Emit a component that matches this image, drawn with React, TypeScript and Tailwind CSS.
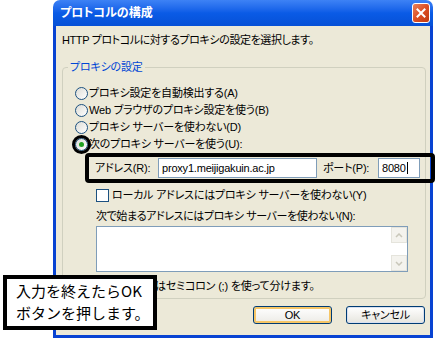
import React from "react";

function Radio({ checked }: { checked?: boolean }) {
  return (
    <span className="relative flex items-center justify-center w-[13px] h-[13px] rounded-full border border-[#1C5180] bg-gradient-to-br from-[#DCDCD6] to-white shrink-0">
      {checked && <span className="w-[5px] h-[5px] rounded-full bg-[#21A121]" />}
    </span>
  );
}

function RadioRow({ label, checked }: { label: string; checked?: boolean }) {
  return (
    <div className="relative h-[17px] flex items-center gap-[1px]">
      <Radio checked={checked} />
      <span className="leading-[13px]">{label}</span>
      {checked && (
        <span className="absolute left-[-3px] top-[-1px] w-[19px] h-[19px] rounded-full border-[3px] border-black" />
      )}
    </div>
  );
}

export default function App() {
  return (
    <div className="relative w-[436px] h-[338px] bg-white overflow-hidden font-['Liberation_Sans','Noto_Sans_CJK_JP',sans-serif] text-[11px] tracking-[-0.2px] text-black [font-feature-settings:'palt']">
      <div className="ml-[53px] w-[380px] h-[338px] flex flex-col">
        {/* title bar */}
        <div className="h-[26px] shrink-0 rounded-t-[7px] bg-gradient-to-b from-[#3D82F5] via-[#0A5BE6] to-[#0650D6] flex items-center justify-between pl-[7px] pr-[3px]">
          <span className="text-white font-bold text-[12px] leading-[14px] tracking-[0px]">プロトコルの構成</span>
          <span className="w-[18px] h-[20px] rounded-[3px] border border-white bg-gradient-to-br from-[#E8805A] via-[#DC4E22] to-[#C03A10] flex items-center justify-center">
            <svg width="10" height="10" viewBox="0 0 10 10">
              <path d="M1.5 1.5 L8.5 8.5 M8.5 1.5 L1.5 8.5" stroke="white" strokeWidth="2" strokeLinecap="square" />
            </svg>
          </span>
        </div>
        {/* body */}
        <div className="flex-1 bg-[#ECE9D8] border-x-[3px] border-b-[3px] border-[#0843D2] flex flex-col pl-[6px] pr-[4px]">
          <div className="mt-[8px] h-[13px] leading-[13px] tracking-[-0.4px]">HTTP プロトコルに対するプロキシの設定を選択します。</div>
          <fieldset className="mt-[14px] border border-[#D0D0BF] rounded-[4px] pl-[12px] pt-[11px] pb-[5px]">
            <legend className="-ml-[7px] px-[2px] leading-[13px] text-[#0046D5]">プロキシの設定</legend>
            <RadioRow label="プロキシ設定を自動検出する(A)" />
            <RadioRow label="Web ブラウザのプロキシ設定を使う(B)" />
            <RadioRow label="プロキシ サーバーを使わない(D)" />
            <RadioRow label="次のプロキシ サーバーを使う(U):" checked />
            {/* address row */}
            <div className="relative mt-[5px] h-[20px] flex items-center pl-[20px]">
              <span className="w-[63px] leading-[13px]">アドレス(R):</span>
              <span className="w-[159px] h-[20px] bg-white border border-[#7F9DB9] flex items-center pl-[3px] leading-[13px]">proxy1.meijigakuin.ac.jp</span>
              <span className="ml-[6px] w-[55px] leading-[13px]">ポート(P):</span>
              <span className="w-[42px] h-[20px] bg-white border border-[#7F9DB9] flex items-center pl-[3px] leading-[13px]">
                8080<span className="w-[1px] h-[12px] bg-black ml-[1px]" />
              </span>
              <span className="absolute left-[10px] top-[-5px] w-[350px] h-[30px] border-[4px] border-black rounded-[4px]" />
            </div>
            {/* checkbox */}
            <div className="mt-[10px] h-[14px] flex items-center gap-[3px] pl-[21px]">
              <span className="w-[13px] h-[13px] border border-[#1C5180] bg-white shrink-0" />
              <span className="leading-[13px]">ローカル アドレスにはプロキシ サーバーを使わない(Y)</span>
            </div>
            <div className="mt-[8px] h-[13px] leading-[13px] pl-[21px] tracking-[-0.4px]">次で始まるアドレスにはプロキシ サーバーを使わない(N):</div>
            <div className="mt-[3px] ml-[21px] w-[312px] h-[46px] bg-white border border-[#7F9DB9] flex justify-end">
              <div className="w-[16px] flex flex-col justify-between">
                <span className="h-[16px] bg-[#F4F3EE] border border-[#E5E4DC] flex items-center justify-center">
                  <svg width="8" height="5" viewBox="0 0 8 5"><path d="M1 4 L4 1 L7 4" stroke="#C9C7BA" strokeWidth="1.5" fill="none" /></svg>
                </span>
                <span className="h-[16px] bg-[#F4F3EE] border border-[#E5E4DC] flex items-center justify-center">
                  <svg width="8" height="5" viewBox="0 0 8 5"><path d="M1 1 L4 4 L7 1" stroke="#C9C7BA" strokeWidth="1.5" fill="none" /></svg>
                </span>
              </div>
            </div>
            <div className="mt-[8px] h-[13px] leading-[13px] pl-[80px]">はセミコロン (;) を使って分けます。</div>
          </fieldset>
          <div className="mt-[7px] flex justify-end gap-[14px] pr-[1px]">
            <button className="w-[79px] h-[18px] rounded-[3px] border border-[#003C74] bg-gradient-to-b from-white to-[#ECEBE6] shadow-[inset_0_0_0_2px_#F6C667] leading-[13px] text-[11px]">OK</button>
            <button className="w-[79px] h-[18px] rounded-[3px] border border-[#003C74] bg-gradient-to-b from-white to-[#E6E5DE] shadow-[inset_0_0_0_1px_#D8E0F0] leading-[13px] text-[11px]">キャンセル</button>
          </div>
        </div>
      </div>
      {/* annotation */}
      <div className="absolute left-[3px] top-[275px] w-[154px] h-[55px] bg-white border-[4px] border-black pl-[9px] pt-[1px] text-[15px] leading-[22px] tracking-[0px] font-['Noto_Sans_CJK_JP',sans-serif] [font-feature-settings:normal]">
        <div>入力を終えたらOK</div>
        <div>ボタンを押します。</div>
      </div>
    </div>
  );
}
